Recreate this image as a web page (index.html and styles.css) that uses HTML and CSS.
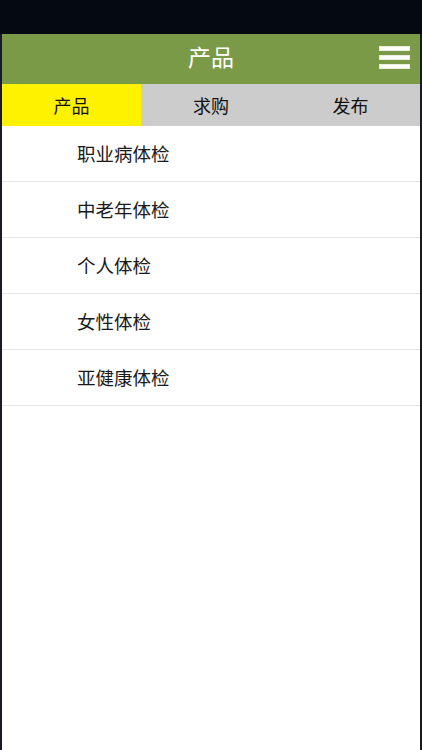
FILE: index.html
```html
<!DOCTYPE html>
<html lang="zh">
<head>
<meta charset="utf-8">
<link rel="stylesheet" href="styles.css">
</head>
<body>
<div class="statusbar"></div>
<div class="screen">
  <header class="topbar">
    <h1 class="title">产品</h1>
    <div class="menu"><span></span><span></span><span></span></div>
  </header>
  <nav class="tabs">
    <div class="tab active">产品</div>
    <div class="tab">求购</div>
    <div class="tab">发布</div>
  </nav>
  <ul class="list">
    <li class="item">职业病体检</li>
    <li class="item">中老年体检</li>
    <li class="item">个人体检</li>
    <li class="item">女性体检</li>
    <li class="item">亚健康体检</li>
  </ul>
</div>
</body>
</html>
```
FILE: styles.css
```css
* { box-sizing: border-box; }
html, body { margin: 0; padding: 0; }
body {
  width: 422px;
  height: 750px;
  background: #050912;
  font-family: "Noto Sans CJK SC", "Noto Sans", sans-serif;
  display: flex;
  flex-direction: column;
  overflow: hidden;
}
.statusbar { height: 34px; flex: none; background: #050912; }
.screen {
  flex: 1;
  background: #fff;
  border-left: 2px solid #1b1828;
  border-right: 2px solid #1b1828;
  display: flex;
  flex-direction: column;
}
.topbar {
  height: 50px;
  background: #7b9a47;
  position: relative;
  display: flex;
  align-items: center;
  justify-content: center;
}
.title {
  margin: 0 0 5px;
  font-size: 23px;
  font-weight: normal;
  color: #fff;
  line-height: 1;
}
.menu {
  position: absolute;
  right: 10px;
  top: 12px;
  width: 31px;
  display: flex;
  flex-direction: column;
  gap: 4px;
}
.menu span {
  display: block;
  height: 5px;
  background: #fff;
  border: 1px solid #e9eedf;
}
.tabs {
  height: 42px;
  display: grid;
  grid-template-columns: 139px 140px 1fr;
  background: #cccccc;
}
.tab {
  display: flex;
  align-items: center;
  justify-content: center;
  font-size: 18px;
  color: #111;
  padding-bottom: 1px;
}
.tab.active { background: #fff200; }
.list { list-style: none; margin: 0; padding: 0; }
.item {
  height: 56px;
  display: flex;
  align-items: center;
  padding-left: 75px;
  padding-bottom: 2px;
  font-size: 18.5px;
  color: #1a1a1a;
  border-bottom: 1px solid #e5e5e5;
}
```
